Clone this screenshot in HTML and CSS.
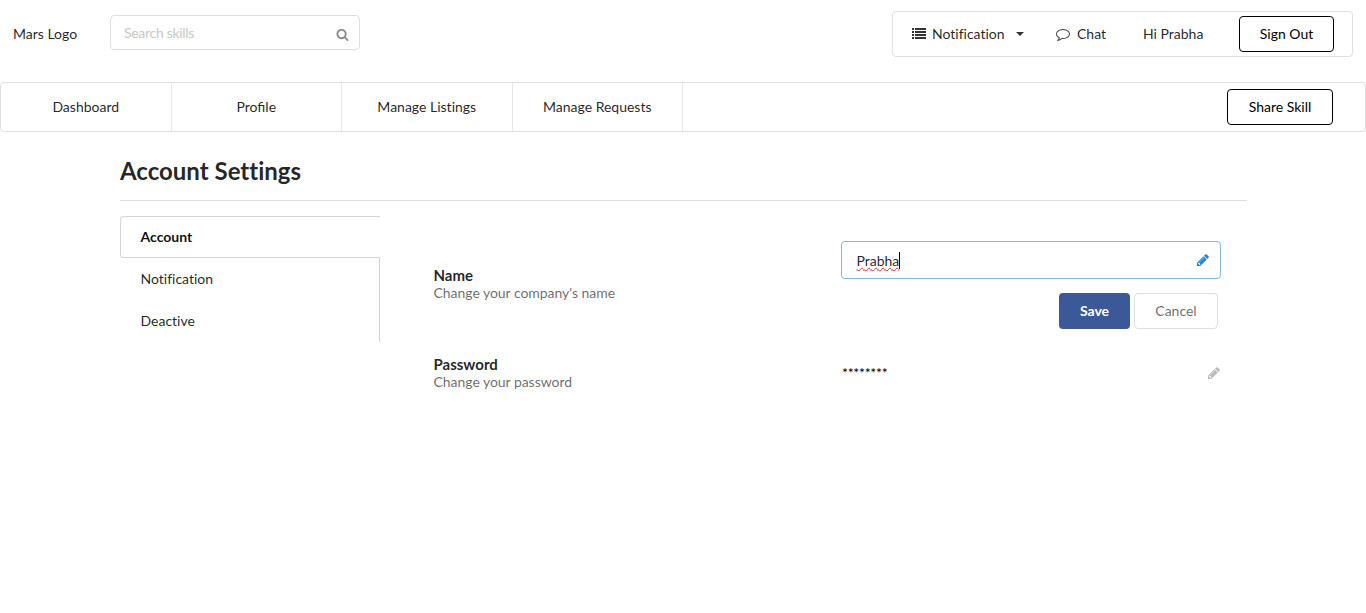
FILE: index.html
```
<!DOCTYPE html>
<html lang="en">
<head>
<meta charset="utf-8">
<title>Account Settings</title>
<link rel="stylesheet" href="styles.css">
</head>
<body>
<header class="topbar">
  <span class="logo">Mars Logo</span>
  <div class="search">
    <input class="search-input" type="text" placeholder="Search skills">
    <svg class="icon search-icon" viewBox="0 0 1792 1792"><path d="M1216 832q0-185-131.5-316.5t-316.5-131.5-316.5 131.5-131.5 316.5 131.5 316.5 316.5 131.5 316.5-131.5 131.5-316.5zm512 832q0 52-38 90t-90 38q-54 0-90-38l-343-342q-179 124-399 124-143 0-273.5-55.5t-225-150-150-225-55.5-273.5 55.5-273.5 150-225 225-150 273.5-55.5 273.5 55.5 225 150 150 225 55.5 273.5q0 220-124 399l343 343q37 37 37 90z"/></svg>
  </div>
  <div class="user-menu">
    <svg class="icon list-icon" viewBox="0 0 14 14"><path d="M0 1h2v2H0zM3 1h11v2H3zM0 4h2v2H0zM3 4h11v2H3zM0 7h2v2H0zM3 7h11v2H3zM0 10h2v2H0zM3 10h11v2H3z"/></svg>
    <span class="menu-notification">Notification</span>
    <svg class="caret" viewBox="0 0 8 4"><path d="M0 0h8L4 4z"/></svg>
    <svg class="icon chat-icon" viewBox="0 0 1792 1792"><path d="M896 384q-204 0-381.5 69.5t-282 187.5-104.5 255q0 112 71.5 213.5t201.5 175.5l87 50-27 96q-24 91-70 172 152-63 275-171l43-38 57 6q69 8 130 8 204 0 381.5-69.5t282-187.5 104.5-255-104.5-255-282-187.5-381.5-69.5zm896 512q0 174-120 321.5t-326 233-450 85.5q-70 0-145-8-198 175-460 242-49 14-114 22h-5q-15 0-27-10.5t-16-27.5v-1q-3-4-.5-12t2-10 4.5-9.5l6-9 7-8.5 8-9q7-8 31-34.5t34.5-38 31-39.5 32.5-51 27-59 26-76q-157-89-247.5-220t-90.5-281q0-174 120-321.5t326-233 450-85.5 450 85.5 326 233 120 321.5z"/></svg>
    <span class="menu-chat">Chat</span>
    <span class="menu-greeting">Hi Prabha</span>
    <button class="button outline sign-out">Sign Out</button>
  </div>
</header>
<nav class="navbar">
  <a class="nav-item">Dashboard</a>
  <a class="nav-item nav-profile">Profile</a>
  <a class="nav-item">Manage Listings</a>
  <a class="nav-item">Manage Requests</a>
  <button class="button outline share">Share Skill</button>
</nav>
<main class="container">
  <h1 class="title">Account Settings</h1>
  <div class="columns">
    <aside class="tabs">
      <a class="tab active">Account</a>
      <a class="tab">Notification</a>
      <a class="tab">Deactive</a>
    </aside>
    <section class="settings">
      <div class="setting">
        <div class="label label-name">
          <div class="label-title">Name</div>
          <div class="label-text">Change your company's name</div>
        </div>
        <div class="editor">
          <div class="name-field">
            <span class="name-value"><span class="misspelled">Prabha</span></span>
            <svg class="icon pencil-blue" viewBox="0 0 1792 1792"><path d="M491 1536l91-91-235-235-91 91v107h128v128h107zm523-928q0-22-22-22-10 0-17 7l-542 542q-7 7-7 17 0 22 22 22 10 0 17-7l542-542q7-7 7-17zm-54-192l416 416-832 832h-416v-416zm683 96q0 53-37 90l-166 166-416-416 166-165q36-38 90-38 53 0 91 38l235 234q37 39 37 91z"/></svg>
          </div>
          <div class="actions">
            <button class="button save">Save</button>
            <button class="button cancel">Cancel</button>
          </div>
        </div>
      </div>
      <div class="setting setting-password">
        <div class="label">
          <div class="label-title">Password</div>
          <div class="label-text">Change your password</div>
        </div>
        <div class="password-row">
          <span class="password">********</span>
          <svg class="icon pencil-gray" viewBox="0 0 1792 1792"><path d="M491 1536l91-91-235-235-91 91v107h128v128h107zm523-928q0-22-22-22-10 0-17 7l-542 542q-7 7-7 17 0 22 22 22 10 0 17-7l542-542q7-7 7-17zm-54-192l416 416-832 832h-416v-416zm683 96q0 53-37 90l-166 166-416-416 166-165q36-38 90-38 53 0 91 38l235 234q37 39 37 91z"/></svg>
        </div>
      </div>
    </section>
  </div>
</main>
</body>
</html>
```
FILE: styles.css
```
* { box-sizing: border-box; }
body {
  margin: 0;
  background: #fff;
  color: rgba(0, 0, 0, .87);
  font: 14px/18px Lato, sans-serif;
  font-variant-ligatures: none;
}
.icon { width: 14px; height: 14px; flex: none; fill: currentColor; }
.topbar {
  display: flex;
  align-items: flex-start;
  height: 82px;
  padding: 11px 13px 0;
}
.logo { width: 97px; padding-top: 14px; }
.search {
  display: flex;
  align-items: center;
  width: 250px;
  height: 35px;
  margin-top: 4px;
  padding: 0 10px 0 13px;
  border: 1px solid #dededf;
  border-radius: 4px;
}
.search-input {
  flex: 1;
  min-width: 0;
  padding: 0;
  border: 0;
  outline: 0;
  background: none;
  font: inherit;
  letter-spacing: -.3px;
}
.search-input::placeholder { color: #c7c7c8; }
.search-icon { width: 13px; height: 13px; color: #8c8c8c; margin-top: 3px; }
.user-menu {
  display: flex;
  align-items: center;
  width: 461px;
  height: 46px;
  margin-left: auto;
  padding: 0 18px 0 19px;
  border: 1px solid #dededf;
  border-radius: 4px;
}
.list-icon { color: #333; }
.menu-notification { width: 84px; margin-left: 6px; }
.caret { width: 8px; height: 4px; fill: #333; }
.chat-icon { margin-left: 32px; color: #444; }
.menu-chat { width: 66px; margin-left: 7px; }
.button {
  height: 36px;
  padding: 0;
  border: 0;
  border-radius: 4px;
  background: #fff;
  font: inherit;
  text-align: center;
}
.outline { border: 1px solid #000; color: #000; }
.sign-out { width: 95px; margin-left: auto; }
.navbar {
  display: flex;
  align-items: center;
  height: 50px;
  padding-right: 32px;
  border: 1px solid #dededf;
  border-radius: 4px;
}
.nav-item {
  width: 170.5px;
  height: 48px;
  border-right: 1px solid #e8e8e9;
  line-height: 48px;
  text-align: center;
}
.nav-profile { font-variant-ligatures: normal; }
.share { width: 106px; margin-left: auto; }
.container { width: 1127px; margin: 0 0 0 120px; }
.title {
  height: 69px;
  margin: 0 0 15px;
  padding-top: 23px;
  border-bottom: 1px solid #dededf;
  font-size: 24px;
  font-weight: 700;
  line-height: 31px;
}
.columns { display: flex; align-items: flex-start; }
.tabs { width: 260px; }
.tab {
  display: block;
  height: 42px;
  padding-left: 20.5px;
  border-right: 1px solid #d4d4d5;
  line-height: 42px;
}
.tab.active {
  padding-left: 19.5px;
  border: 1px solid #d4d4d5;
  border-right: 0;
  border-radius: 4px 0 0 4px;
  color: rgba(0, 0, 0, .95);
  font-weight: 700;
  line-height: 40px;
}
.settings { width: 788px; margin-left: 53px; padding-top: 25px; }
.setting { display: flex; }
.label { width: 408px; padding-left: .5px; }
.label-name { padding-top: 25px; }
.label-title { font-size: 15px; font-weight: 700; }
.label-text { color: rgba(0, 0, 0, .6); letter-spacing: -.04px; }
.editor { width: 380px; }
.name-field {
  display: flex;
  align-items: center;
  justify-content: space-between;
  height: 38px;
  padding: 0 10px 0 14.5px;
  border: 1px solid #85b7d9;
  border-radius: 4px;
}
.name-value { height: 17px; border-right: 1px solid #000; line-height: 18px; }
.misspelled {
  text-decoration: underline wavy #e02030 .7px;
  text-decoration-skip-ink: none;
  text-underline-offset: 1px;
}
.pencil-blue { color: #2185d0; }
.actions {
  display: flex;
  justify-content: flex-end;
  gap: 4px;
  margin-top: 14px;
  padding-right: 3px;
}
.save { width: 71px; background: #3b5998; color: #fff; font-weight: 700; }
.cancel { width: 84px; border: 1px solid #dededf; color: rgba(0, 0, 0, .6); }
.setting-password { margin-top: 26px; }
.password-row {
  display: flex;
  align-items: center;
  justify-content: space-between;
  width: 380px;
  height: 36px;
  padding-left: 1px;
}
.password { color: #000; letter-spacing: -.28px; }
.pencil-gray { color: #bababa; }
```
